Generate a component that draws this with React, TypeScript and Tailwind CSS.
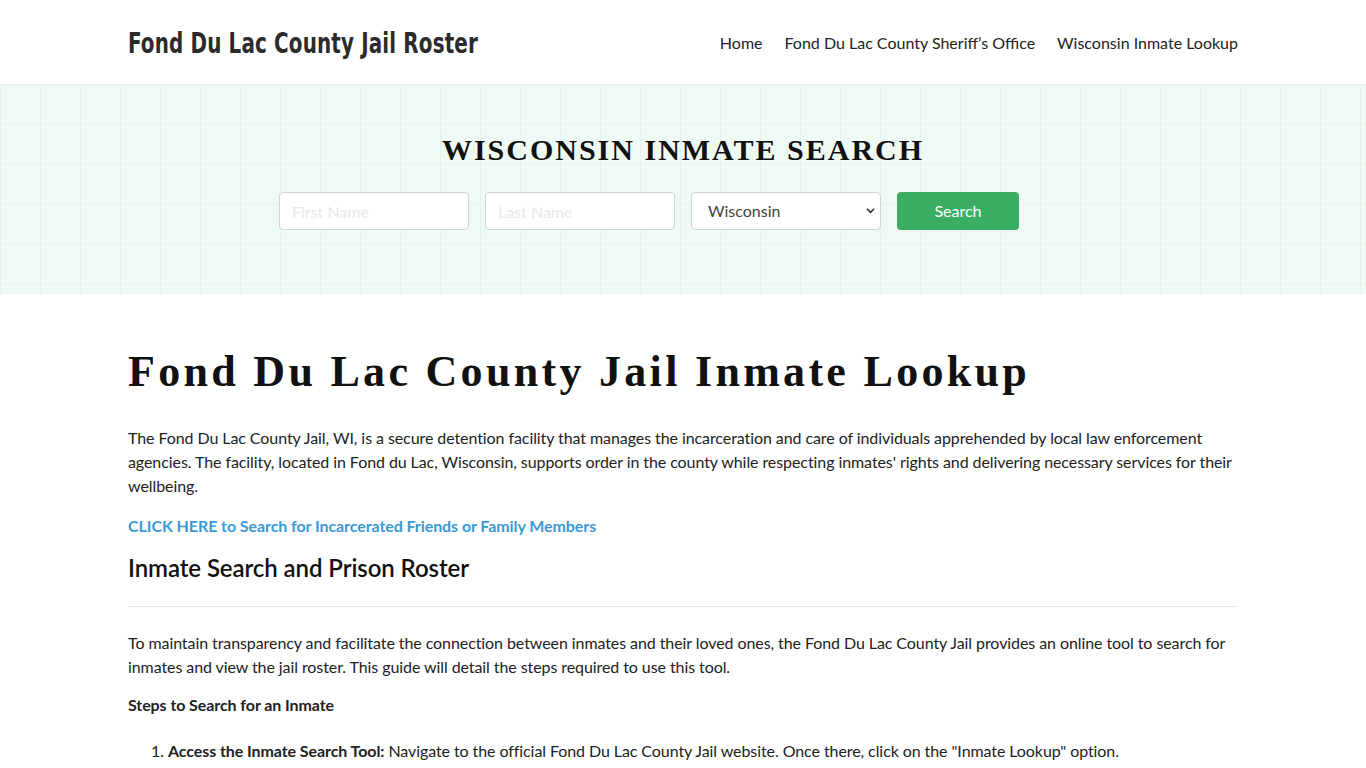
import React from 'react';

const navLinks = ['Home', 'Fond Du Lac County Sheriff’s Office', 'Wisconsin Inmate Lookup'];

export default function App() {
  return (
    <div className="min-h-screen bg-white font-['Lato',sans-serif] text-[#222]">
      {/* Header */}
      <header className="h-[84px] bg-white">
        <div className="mx-auto flex h-full w-[1110px] items-center justify-between">
          <a className="inline-block origin-left scale-x-[0.79] pt-[3px] font-['DejaVu_Sans_Condensed',sans-serif] text-[28px] font-bold tracking-[0.2px] text-[#2b2b2b]">
            Fond Du Lac County Jail Roster
          </a>
          <nav className="flex items-center gap-[22px] pt-[2px] text-[16px] text-[#222]">
            {navLinks.map((l) => (
              <a key={l}>{l}</a>
            ))}
          </nav>
        </div>
      </header>

      {/* Search hero */}
      <section className="h-[210px] bg-[#effaf4] bg-[linear-gradient(to_right,#e3f3ea_1px,transparent_1px),linear-gradient(to_bottom,#e3f3ea_1px,transparent_1px)] bg-[size:40px_40px]">
        <div className="flex flex-col items-center pt-[46px]">
          <h2 className="font-['Liberation_Serif',serif] text-[30px] font-bold leading-[40px] tracking-[2px] text-[#111]">
            WISCONSIN INMATE SEARCH
          </h2>
          <form className="mt-[22px] flex gap-[16px] pr-[68px]">
            <input
              placeholder="First Name"
              className="h-[38px] w-[190px] rounded-[4px] border border-[#ccd3d8] bg-white px-[12px] text-[16px] placeholder:text-[#e6e9ec]"
            />
            <input
              placeholder="Last Name"
              className="h-[38px] w-[190px] rounded-[4px] border border-[#ccd3d8] bg-white px-[12px] text-[16px] placeholder:text-[#e6e9ec]"
            />
            <div className="relative">
              <select className="h-[38px] w-[190px] appearance-none rounded-[4px] border border-[#ccd3d8] bg-white pl-[16px] text-[16px] text-[#444]">
                <option>Wisconsin</option>
              </select>
              <svg
                className="pointer-events-none absolute right-[6px] top-[15px]"
                width="9"
                height="7"
                viewBox="0 0 10 7"
              >
                <path d="M1 1.5l4 4 4-4" fill="none" stroke="#333" strokeWidth="1.8" />
              </svg>
            </div>
            <button
              type="button"
              className="h-[38px] w-[122px] rounded-[4px] bg-[#3cae63] text-[16px] text-white"
            >
              Search
            </button>
          </form>
        </div>
      </section>

      {/* Main content */}
      <main className="mx-auto w-[1110px] pt-[50px] tracking-[-0.08px]">
        <h1 className="font-['Liberation_Serif',serif] text-[44px] font-bold leading-[56px] tracking-[3.3px] text-[#111]">
          Fond Du Lac County Jail Inmate Lookup
        </h1>
        <p className="mt-[26px] text-[16px] leading-[24px] text-[#222]">
          The Fond Du Lac County Jail, WI, is a secure detention facility that manages the incarceration and care of individuals apprehended by local law enforcement agencies. The facility, located in Fond du Lac, Wisconsin, supports order in the county while respecting inmates' rights and delivering necessary services for their wellbeing.
        </p>
        <p className="mt-[16px] text-[16px] font-bold leading-[24px] text-[#3b9ad6]">
          <a>CLICK HERE to Search for Incarcerated Friends or Family Members</a>
        </p>
        <h2 className="mt-[14px] text-[24px] font-semibold leading-[32px] text-[#111]">
          Inmate Search and Prison Roster
        </h2>
        <hr className="mt-[22px] border-t border-[#e8e8e8]" />
        <p className="mt-[24px] text-[16px] leading-[24px] text-[#222]">
          To maintain transparency and facilitate the connection between inmates and their loved ones, the Fond Du Lac County Jail provides an online tool to search for inmates and view the jail roster. This guide will detail the steps required to use this tool.
        </p>
        <p className="mt-[14px] text-[16px] font-bold leading-[24px] text-[#222]">
          Steps to Search for an Inmate
        </p>
        <ol className="mt-[22px] list-decimal pl-[40px] text-[16px] leading-[24px] text-[#222]">
          <li>
            <strong>Access the Inmate Search Tool:</strong> Navigate to the official Fond Du Lac County Jail website. Once there, click on the "Inmate Lookup" option.
          </li>
        </ol>
      </main>
    </div>
  );
}
